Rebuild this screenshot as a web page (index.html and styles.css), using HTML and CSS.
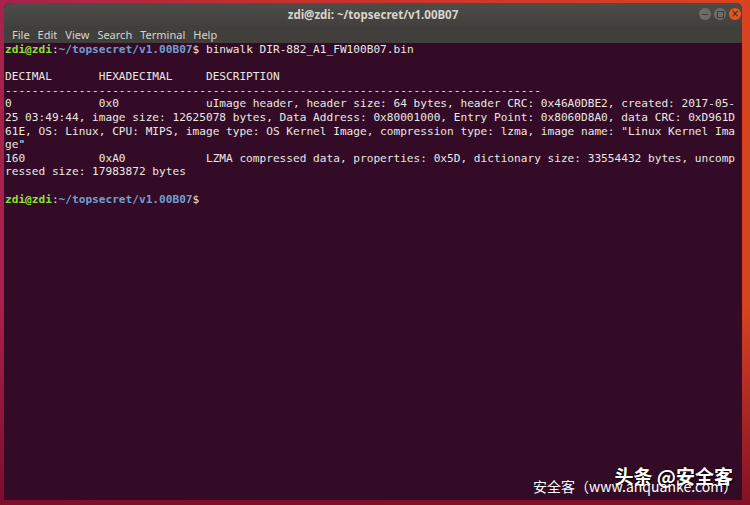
FILE: index.html
```html
<!DOCTYPE html>
<html lang="en">
<head>
  <meta charset="UTF-8" />
  <title>zdi@zdi: ~/topsecret/v1.00B07</title>
  <link rel="stylesheet" href="styles.css">
</head>
<body>

  <div class="window">
    <div class="titlebar">
      <span class="title">zdi@zdi: ~/topsecret/v1.00B07</span>
      <div class="controls">
        <span class="btn btn-min"><span class="min-bar"></span></span>
        <span class="btn btn-max"><span class="max-box"></span></span>
        <span class="btn btn-close">&times;</span>
      </div>
    </div>

    <div class="menubar">
      <span class="menu-item">File</span>
      <span class="menu-item">Edit</span>
      <span class="menu-item">View</span>
      <span class="menu-item">Search</span>
      <span class="menu-item">Terminal</span>
      <span class="menu-item">Help</span>
    </div>

    <!-- Terminal output -->
    <div class="term">
      <div class="line"><span class="user">zdi@zdi</span><span>:</span><span class="path">~/topsecret/v1.00B07</span><span>$ binwalk DIR-882_A1_FW100B07.bin</span></div>
      <div class="line"></div>
      <div class="line">DECIMAL       HEXADECIMAL     DESCRIPTION</div>
      <div class="line">--------------------------------------------------------------------------------</div>
      <div class="line">0             0x0             uImage header, header size: 64 bytes, header CRC: 0x46A0DBE2, created: 2017-05-</div>
      <div class="line">25 03:49:44, image size: 12625078 bytes, Data Address: 0x80001000, Entry Point: 0x8060D8A0, data CRC: 0xD961D</div>
      <div class="line">61E, OS: Linux, CPU: MIPS, image type: OS Kernel Image, compression type: lzma, image name: "Linux Kernel Ima</div>
      <div class="line">ge"</div>
      <div class="line">160           0xA0            LZMA compressed data, properties: 0x5D, dictionary size: 33554432 bytes, uncomp</div>
      <div class="line">ressed size: 17983872 bytes</div>
      <div class="line"></div>
      <div class="line"><span class="user">zdi@zdi</span><span>:</span><span class="path">~/topsecret/v1.00B07</span><span>$</span></div>
    </div>
  </div>

  <!-- watermark -->
  <div class="watermark">
    <span class="wm-big">头条 @安全客</span>
    <span class="wm-small">安全客（www.anquanke.com）</span>
  </div>

</body>
</html>
```

FILE: styles.css
```css
body {
  margin: 0;
  width: 750px;
  height: 505px;
  overflow: hidden;
  position: relative;
  background:
    linear-gradient(to bottom, rgba(120, 10, 40, 0) 60%, rgba(120, 10, 40, 0.9) 100%),
    linear-gradient(to right, #a8214c 0%, #c8312c 40%, #d9431f 100%);
}
.window {
  margin: 3px 0 0 4px;
  width: 738px;
  height: 497px;
  display: flex;
  flex-direction: column;
  border-radius: 6px 6px 0 0;
  overflow: hidden;
  background: #330b26;
}
.titlebar {
  height: 23px;
  background: linear-gradient(to bottom, #4d4c48, #43413d);
  display: flex;
  align-items: center;
  justify-content: center;
  position: relative;
}
.title {
  font-family: "Noto Sans", sans-serif;
  font-size: 11.5px;
  font-weight: bold;
  color: #d8d4cb;
}
.controls {
  position: absolute;
  right: 1px;
  top: 5px;
  display: flex;
  gap: 3px;
}
.btn {
  width: 12px;
  height: 12px;
  border-radius: 50%;
  background: #6d6c67;
  display: flex;
  align-items: center;
  justify-content: center;
}
.min-bar {
  width: 6px;
  height: 1px;
  background: #3c3b37;
}
.max-box {
  width: 5px;
  height: 5px;
  border: 1px solid #3c3b37;
}
.btn-close {
  background: #e6561f;
  color: #3a2418;
  font-family: "DejaVu Sans", sans-serif;
  font-size: 10px;
  line-height: 12px;
}
.menubar {
  height: 17px;
  background: #413f3b;
  display: flex;
  align-items: center;
  padding-left: 4px;
  font-family: "Noto Sans", sans-serif;
  font-size: 11px;
  color: #d8d4cb;
}
.menu-item {
  padding: 0 4px;
}
.term {
  flex: 1;
  padding: 0 0 0 1px;
  font-family: "DejaVu Sans Mono", monospace;
  font-size: 11.13px;
  line-height: 13.6px;
  color: #e8e8e4;
}
.line {
  height: 13.6px;
  white-space: pre;
}
.user {
  color: #8ae234;
  font-weight: bold;
}
.path {
  color: #729fcf;
  font-weight: bold;
}
.watermark {
  position: absolute;
  right: 16px;
  bottom: 4px;
  width: 200px;
  height: 36px;
}
.wm-big {
  position: absolute;
  right: 1px;
  top: 0;
  font-family: "Noto Sans CJK SC", sans-serif;
  font-size: 19px;
  font-weight: bold;
  line-height: 22px;
  color: #ffffff;
  text-shadow: 0 0 2px #000000, 1px 1px 1px #000000;
}
.wm-small {
  position: absolute;
  left: -1px;
  top: 12px;
  font-family: "Noto Sans CJK SC", sans-serif;
  font-size: 14px;
  line-height: 18px;
  color: #ffffff;
  white-space: nowrap;
}
```
